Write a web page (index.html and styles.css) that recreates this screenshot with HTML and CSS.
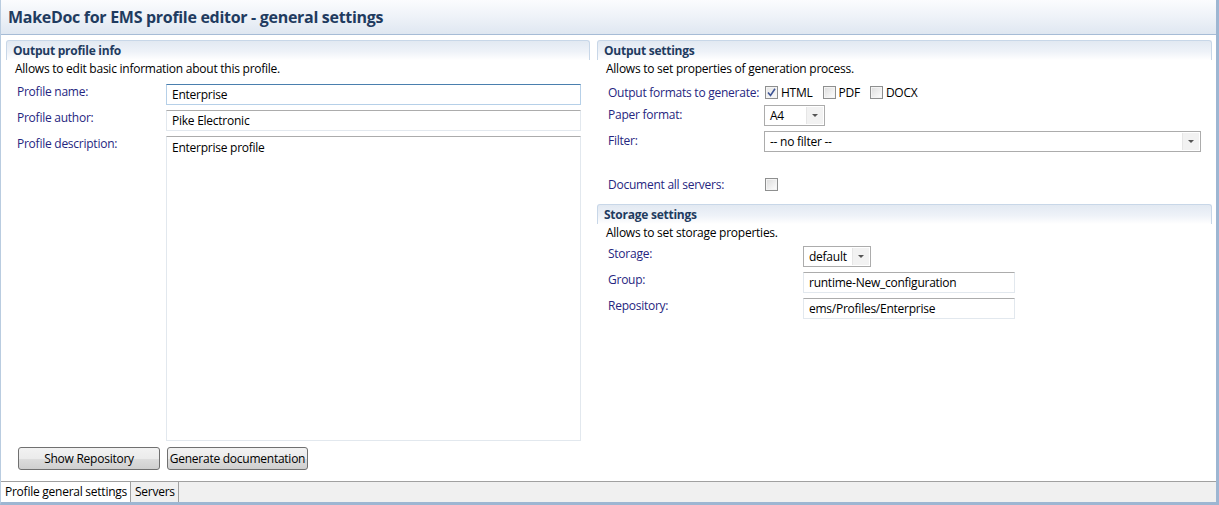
FILE: index.html
```html
<!DOCTYPE html>
<html>
<head>
<meta charset="utf-8">
<link rel="stylesheet" href="styles.css">
</head>
<body>
<div class="window">
  <div class="titlebar"><h1 class="title">MakeDoc for EMS profile editor - general settings</h1></div>
  <div class="content">
    <div class="col col-left">
      <section class="section section-fill">
        <div class="sec-head">Output profile info</div>
        <div class="sec-desc">Allows to edit basic information about this profile.</div>
        <div class="form form-left">
          <label class="lbl lbl-top">Profile name:</label>
          <div class="input focused">Enterprise</div>
          <label class="lbl lbl-top">Profile author:</label>
          <div class="input">Pike Electronic</div>
          <label class="lbl lbl-top">Profile description:</label>
          <div class="input textarea">Enterprise profile</div>
        </div>
        <div class="buttons">
          <button class="btn btn-show">Show Repository</button>
          <button class="btn btn-gen">Generate documentation</button>
        </div>
      </section>
    </div>
    <div class="col col-right">
      <section class="section">
        <div class="sec-head">Output settings</div>
        <div class="sec-desc">Allows to set properties of generation process.</div>
        <div class="form form-out">
          <label class="lbl lbl-mid">Output formats to generate:</label>
          <div class="checks">
            <span class="chk checked"><svg width="9" height="9" viewBox="0 0 9 9"><path d="M1 4.5 L3.5 7.5 L8 0.8" fill="none" stroke="#3f5595" stroke-width="1.6"/></svg></span><span class="chk-lbl">HTML</span>
            <span class="chk"></span><span class="chk-lbl">PDF</span>
            <span class="chk"></span><span class="chk-lbl">DOCX</span>
          </div>
          <label class="lbl">Paper format:</label>
          <div class="combo combo-a4"><span class="combo-val">A4</span><span class="combo-btn"><i class="arrow"></i></span></div>
          <label class="lbl">Filter:</label>
          <div class="combo combo-filter"><span class="combo-val">-- no filter --</span><span class="combo-btn"><i class="arrow"></i></span></div>
          <label class="lbl lbl-doc">Document all servers:</label>
          <div class="doc-check"><span class="chk"></span></div>
        </div>
      </section>
      <section class="section section-storage">
        <div class="sec-head">Storage settings</div>
        <div class="sec-desc">Allows to set storage properties.</div>
        <div class="form form-storage">
          <label class="lbl lbl-top">Storage:</label>
          <div class="combo combo-storage"><span class="combo-val">default</span><span class="combo-btn"><i class="arrow"></i></span></div>
          <label class="lbl lbl-top">Group:</label>
          <div class="input input-short">runtime-New_configuration</div>
          <label class="lbl lbl-top">Repository:</label>
          <div class="input input-short">ems/Profiles/Enterprise</div>
        </div>
      </section>
    </div>
  </div>
  <div class="tabbar">
    <div class="tab active">Profile general settings</div>
    <div class="tab">Servers</div>
  </div>
</div>
</body>
</html>
```
FILE: styles.css
```css
* { box-sizing: border-box; }
html, body { margin: 0; padding: 0; background: #ffffff; }
body {
  font-family: "Open Sans", "Noto Sans", "Liberation Sans", sans-serif;
  font-size: 12px;
  letter-spacing: -0.25px;
  color: #000;
}
.window {
  width: 1219px;
  height: 505px;
  border-left: 1px solid #b9cce0;
  border-right: 3px solid #9db6d2;
  border-bottom: 3px solid #9db6d2;
  display: flex;
  flex-direction: column;
  background: #fff;
}
.titlebar {
  height: 35px;
  flex: none;
  background: linear-gradient(to bottom, #fbfcfe 0%, #eef2f8 50%, #dfe7f1 100%);
  border-bottom: 1px solid #a6bcd6;
  display: flex;
  align-items: center;
  padding-left: 7px;
}
.title {
  margin: 0;
  font-size: 16px;
  font-weight: 700;
  color: #1f3b60;
  letter-spacing: -0.3px;
}
.content {
  flex: 1;
  display: flex;
  gap: 7px;
  padding: 5px 4px 0 5px;
  min-height: 0;
}
.col { display: flex; flex-direction: column; }
.col-left { width: 585px; }
.col-right { flex: 1; }
.section { display: flex; flex-direction: column; }
.section-fill { flex: 1; }
.sec-head {
  height: 20px;
  border: 1px solid #c8d7e8;
  border-bottom: none;
  border-radius: 3px 3px 0 0;
  background: linear-gradient(to bottom, #e2e9f2 0%, #eef2f8 55%, #ffffff 100%);
  font-weight: 700;
  color: #1f3b60;
  padding-left: 6px;
  line-height: 19px;
}
.sec-desc {
  padding: 1px 0 0 9px;
  height: 18px;
  line-height: 16px;
}
.form {
  display: grid;
  row-gap: 5px;
  align-items: start;
}
.lbl {
  color: #262680;
  padding-top: 2px;
  line-height: 16px;
  white-space: nowrap;
}
.lbl-top { padding-top: 0; }
.form-left {
  grid-template-columns: 149px 415px;
  grid-template-rows: 21px 21px 305px;
  padding-left: 11px;
  margin-top: 6px;
}
.input {
  height: 21px;
  border: 1px solid #e2e8ee;
  border-top-color: #acacac;
  background: #fff;
  padding: 2px 5px 0;
  line-height: 16px;
  white-space: nowrap;
}
.input.focused {
  border-color: #b6d0e8;
  border-top-color: #4a7fae;
}
.textarea { height: 305px; padding-top: 3px; }
.buttons {
  display: flex;
  gap: 7px;
  padding-left: 12px;
  margin-top: 6px;
}
.btn {
  height: 23px;
  border: 1px solid #707070;
  border-radius: 3px;
  background: linear-gradient(to bottom, #f2f2f2 0%, #ebebeb 50%, #dddddd 51%, #cfcfcf 100%);
  font-family: inherit;
  font-size: 12px;
  letter-spacing: -0.25px;
  color: #000;
  padding: 0;
  line-height: 18px;
  white-space: nowrap;
}
.btn-show { width: 142px; }
.btn-gen { width: 141px; }

.form-out {
  grid-template-columns: 156px 1fr;
  grid-template-rows: 15px 21px 21px 34px;
  padding-left: 11px;
  padding-right: 11px;
  margin-top: 7px;
}
.lbl-mid { padding-top: 0; line-height: 15px; }
.checks { display: flex; align-items: center; height: 15px; padding-left: 1px; }
.chk {
  width: 13px;
  height: 13px;
  border: 1px solid #8e8f8f;
  background: linear-gradient(135deg, #dcdcdc 0%, #f4f4f4 70%, #ffffff 100%);
  box-shadow: inset 0 0 0 1px #f4f4f4;
  display: inline-flex;
  align-items: center;
  justify-content: center;
  flex: none;
}
.chk.checked { background: linear-gradient(135deg, #e6e6e6 0%, #fafafa 100%); }
.chk-lbl { margin: 0 10px 0 3px; }
.combo {
  height: 21px;
  border: 1px solid #acacac;
  display: flex;
  background: #fff;
}
.combo-val { flex: 1; padding: 2px 0 0 5px; line-height: 16px; }
.combo-btn {
  width: 17px;
  border-left: 1px solid #e6e6e6;
  background: #f2f2f2;
  margin: 1px;
  display: flex;
  align-items: center;
  justify-content: center;
}
.arrow {
  width: 0; height: 0;
  border-left: 3px solid transparent;
  border-right: 3px solid transparent;
  border-top: 3px solid #555;
}
.combo-a4 { width: 61px; }
.combo-filter { width: 437px; }
.lbl-doc { padding-top: 20px; }
.doc-check { padding-top: 21px; padding-left: 1px; height: 34px; }

.section-storage { margin-top: 13px; }
.form-storage {
  grid-template-columns: 195px 212px;
  grid-template-rows: 21px 21px 21px;
  padding-left: 11px;
  margin-top: 4px;
}
.combo-storage { width: 68px; }
.input-short { width: 212px; }

.tabbar {
  height: 21px;
  flex: none;
  margin-top: auto;
  background: #f0f0f0;
  border-top: 1px solid #a0a0a0;
  display: flex;
}
.tab {
  padding: 0 3px 0 4px;
  line-height: 19px;
  border-right: 1px solid #a0a0a0;
  height: 20px;
}
.tab.active { background: #fff; }
```
